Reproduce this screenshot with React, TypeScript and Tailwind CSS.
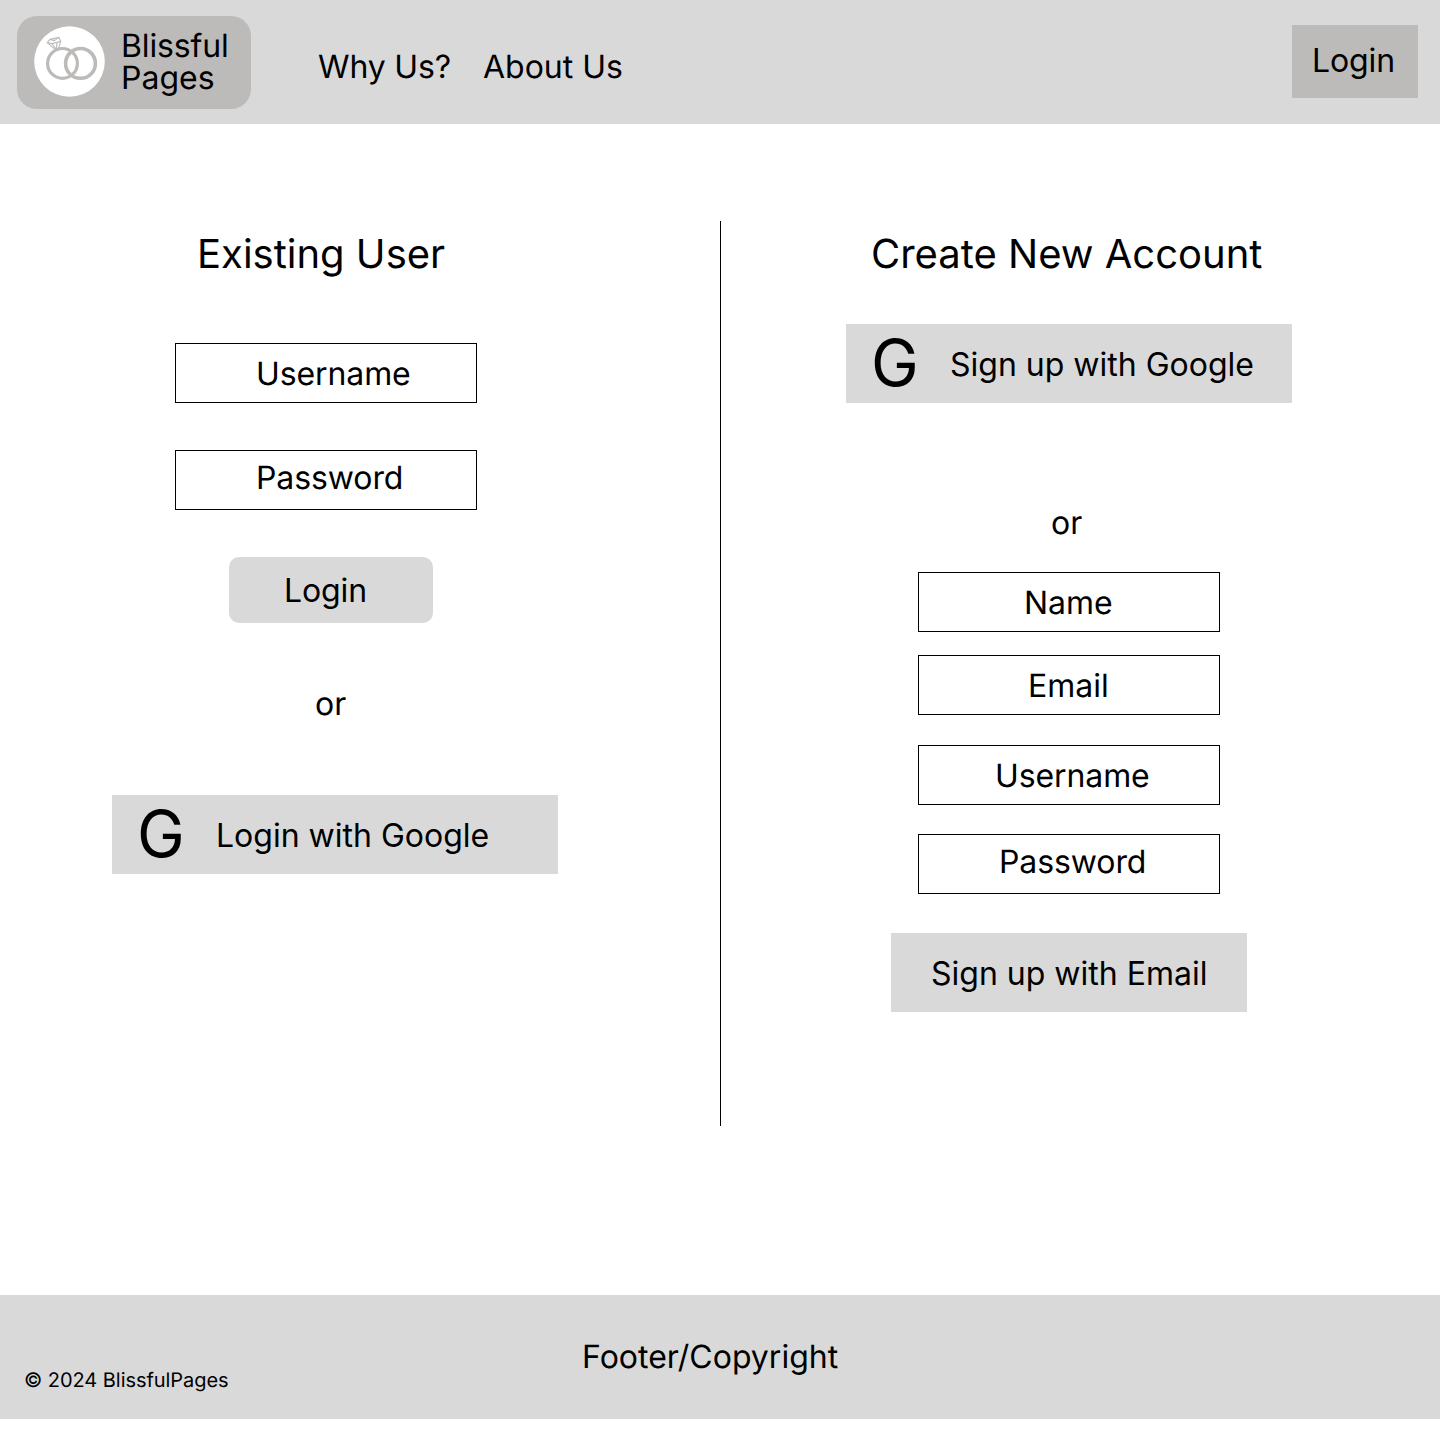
import type { ReactNode } from "react";

function RingsLogo() {
  return (
    <svg className="h-[71px] w-[71px] shrink-0" viewBox="0 0 71 71" fill="none">
      <circle cx="35.5" cy="35.5" r="35.3" fill="#fff" />
      <g stroke="#bcbbb9">
        <circle cx="28.5" cy="37.4" r="14.9" strokeWidth="3.2" />
        <circle cx="46.5" cy="37.4" r="14.9" strokeWidth="3.6" />
        <g strokeWidth="1.1" strokeLinejoin="round">
          <path d="M13.2 16.6 16 13.4 25 11.4 26.8 15.4 24 23.4 21.6 23.8Z" />
          <path d="M13.2 16.6 17.8 17.6 23 16.4 26.8 15.4M17.8 17.6 22.4 23.4 23 16.4M16 13.4 20.4 14.6 25 11.4" />
          <path d="M20 24.2 23 24.4 26 22.6" />
        </g>
      </g>
    </svg>
  );
}

function Field({ children, className }: { children: ReactNode; className: string }) {
  return (
    <div className={`h-[60px] w-[302px] shrink-0 border border-black ${className}`}>{children}</div>
  );
}

function GoogleButton({ children, className }: { children: ReactNode; className: string }) {
  return (
    <button
      className={`flex h-[79px] w-[446px] shrink-0 items-start bg-[#d9d9d9] pl-[25px] text-left ${className}`}
    >
      <span className="w-[79px] shrink-0 text-[64px] leading-[78px]">G</span>
      <span className="pt-[21px]">{children}</span>
    </button>
  );
}

export default function App() {
  return (
    <div className="flex h-[1431px] w-[1440px] flex-col overflow-hidden bg-white font-['Inter',sans-serif] text-[32px] leading-[40px] whitespace-nowrap text-black [font-optical-sizing:none] [text-rendering:geometricPrecision]">
      <header className="flex h-[124px] shrink-0 items-start bg-[#d9d9d9] pr-[22px] pl-[17px]">
        <div className="mt-[16px] flex h-[93px] w-[234px] items-start rounded-[20px] bg-[#bcbbb9] pt-[10px] pl-[17px]">
          <RingsLogo />
          <div className="ml-[16px] pt-[4px] leading-[32px]">
            <p className="tracking-[-0.15px]">Blissful</p>
            <p>Pages</p>
          </div>
        </div>
        <nav className="mt-[47px] ml-[67px] flex">
          <a className="w-[165px] tracking-[-0.15px]">Why Us?</a>
          <a>About Us</a>
        </nav>
        <button className="mt-[25px] ml-auto flex h-[73px] w-[126px] items-start bg-[#bcbbb9] pt-[16px] pl-[20px] tracking-[-0.1px]">
          Login
        </button>
      </header>

      <main className="flex h-[1171px] shrink-0">
        <section className="flex w-[720px] flex-col items-start">
          <h1 className="mt-[106px] ml-[197px] text-[40px] leading-[48px]">Existing User</h1>
          <Field className="mt-[65px] ml-[175px] pt-[10px] pl-[80px] tracking-[-0.1px]">Username</Field>
          <Field className="mt-[47px] ml-[175px] pt-[7px] pl-[80px] tracking-[-0.1px]">Password</Field>
          <button className="mt-[47px] ml-[229px] flex h-[66px] w-[204px] items-start rounded-[10px] bg-[#d9d9d9] pt-[14px] pl-[55px] tracking-[-0.1px]">
            Login
          </button>
          <p className="mt-[61px] ml-[315px]">or</p>
          <GoogleButton className="mt-[71px] ml-[112px]">Login with Google</GoogleButton>
        </section>

        <div className="mt-[97px] h-[905px] w-px shrink-0 bg-black" />

        <section className="flex w-[719px] flex-col items-start">
          <h1 className="mt-[106px] ml-[150px] text-[40px] leading-[48px]">Create New Account</h1>
          <GoogleButton className="mt-[46px] ml-[125px]">Sign up with Google</GoogleButton>
          <p className="mt-[100px] ml-[330px]">or</p>
          <Field className="mt-[29px] ml-[197px] pt-[10px] pl-[105px]">Name</Field>
          <Field className="mt-[23px] ml-[197px] pt-[10px] pl-[109px]">Email</Field>
          <Field className="mt-[30px] ml-[197px] pt-[10px] pl-[76px] tracking-[-0.1px]">Username</Field>
          <Field className="mt-[29px] ml-[197px] pt-[7px] pl-[80px] tracking-[-0.1px]">Password</Field>
          <button className="mt-[39px] ml-[170px] flex h-[79px] w-[356px] items-start bg-[#d9d9d9] pt-[21px] pl-[40px]">
            Sign up with Email
          </button>
        </section>
      </main>

      <footer className="flex h-[124px] shrink-0 items-start bg-[#d9d9d9]">
        <p className="w-[582px] shrink-0 pt-[73px] pl-[24px] text-[20px] leading-[24px] tracking-[-0.05px]">
          © 2024 BlissfulPages
        </p>
        <p className="pt-[42px]">Footer/Copyright</p>
      </footer>
    </div>
  );
}
